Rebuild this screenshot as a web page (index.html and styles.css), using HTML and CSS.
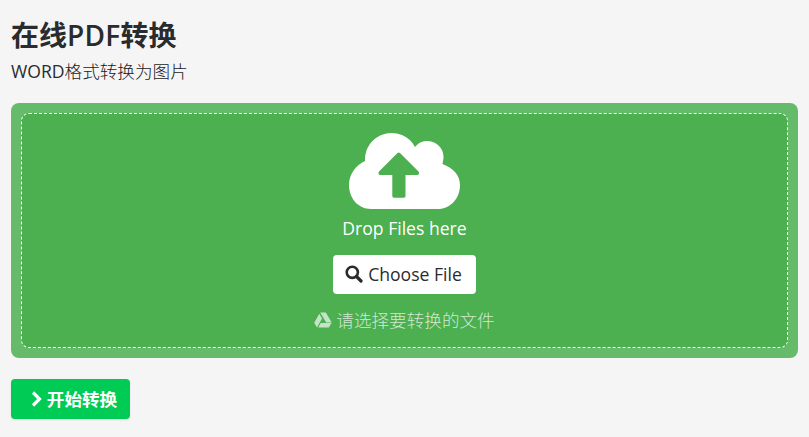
FILE: index.html
```html
<!DOCTYPE html>
<html lang="zh">
<head>
<meta charset="utf-8">
<title>在线PDF转换</title>
<link rel="stylesheet" href="styles.css">
</head>
<body>
<header class="head">
  <h1 class="title">在线<span class="latin">PDF</span>转换</h1>
  <p class="subtitle">WORD<span class="thin">格式转换为图片</span></p>
</header>
<section class="drop">
  <div class="zone">
    <svg class="cloud" viewBox="0 0 111 77" aria-hidden="true">
      <path fill="#fff" d="M22 77C9 77 0 66 0 53C0 42 7 33 16 29A26.600 26.600 0 0 1 66 15A16 16 0 0 1 94 29L93.500 32C104 36 111 43 111 53C111 67 101 77 89 77Z"/>
      <path fill="#4caf50" d="M48.500 21Q49.700 20 51 21L69.500 39.500Q71 42 68.500 43H56.500V64Q56.500 65.700 55 65.700H45Q43.300 65.700 43.300 64V43H31Q28.500 42 30 39.500Z"/>
    </svg>
    <p class="hint">Drop Files here</p>
    <button class="choose" type="button">
      <svg class="search" viewBox="0 0 18 18" aria-hidden="true"><circle cx="7.300" cy="7.300" r="5.600" fill="none" stroke="#292b2c" stroke-width="2.600"/><path d="M11.500 11.500L16 16" stroke="#292b2c" stroke-width="3.200" stroke-linecap="round"/></svg>
      <span>Choose File</span>
    </button>
    <p class="drive">
      <svg class="gdrive" viewBox="0 0 18 16" aria-hidden="true"><path fill="#c5e3c6" d="M6.200 0.500H11.800L17.800 10.500H12.200ZM5.300 1.800L8 6.500L3 15.500L0.200 10.700ZM6.700 11H17.500L14.800 15.500H4.200Z"/></svg>
      <span>请选择要转换的文件</span>
    </p>
  </div>
</section>
<button class="start" type="button">
  <svg class="chev" viewBox="0 0 11 16" aria-hidden="true"><path d="M2 1.500L8.500 8L2 14.500" fill="none" stroke="#fff" stroke-width="3.200"/></svg>
  <span>开始转换</span>
</button>
</body>
</html>
```
FILE: styles.css
```css
* { box-sizing: border-box; }
html, body { height: 100%; }
body {
  margin: 0;
  padding: 17px 11px 0;
  background: #f5f5f5;
  color: #292b2c;
  font-family: "Open Sans", "Noto Sans CJK SC", sans-serif;
  overflow: hidden;
}
.title {
  margin: 0;
  font-size: 28px;
  line-height: 36px;
  font-weight: 700;
}
.latin {
  font-weight: 600;
  letter-spacing: 0.3px;
}
.subtitle {
  margin: 6px 0 0;
  font-size: 17.6px;
  line-height: 24px;
}
.thin {
  font-weight: 300;
  color: #1a1a1a;
}
.drop {
  margin-top: 20px;
  width: 787px;
  height: 255px;
  padding: 10px;
  background: #66bb6a;
  border-radius: 8px;
}
.zone {
  height: 100%;
  display: flex;
  flex-direction: column;
  align-items: center;
  padding-top: 18px;
  background: #4caf50;
  border: 1px dashed #fff;
  border-radius: 8px;
}
.cloud { width: 111px; height: 77px; display: block; }
.hint {
  margin: 7px 0 0;
  color: #fff;
  font-size: 17.6px;
  line-height: 24px;
}
.choose {
  margin-top: 15px;
  height: 39px;
  width: 143px;
  display: flex;
  align-items: center;
  justify-content: center;
  gap: 5px;
  background: #fff;
  border: 0;
  border-radius: 4px;
  color: #292b2c;
  font: 500 17.6px/24px "Open Sans", sans-serif;
  padding: 0 2px 2px 0;
}
.search { width: 18px; height: 18px; }
.drive {
  margin: 14px 0 0;
  display: flex;
  align-items: center;
  gap: 4px;
  color: #cfe8d0;
  font-size: 17.6px;
  line-height: 24px;
  font-weight: 300;
}
.gdrive { width: 18px; height: 16px; }
.start {
  margin-top: 21px;
  width: 119px;
  height: 40px;
  display: flex;
  align-items: center;
  justify-content: center;
  gap: 5px;
  padding: 0 0 0 7px;
  background: #00cc55;
  border: 0;
  border-radius: 4px;
  color: #fff;
  font: 700 17.6px/24px "Open Sans", "Noto Sans CJK SC", sans-serif;
  box-shadow: 0 1px 3px rgba(0,0,0,.08);
}
.chev { width: 11px; height: 16px; }
```
